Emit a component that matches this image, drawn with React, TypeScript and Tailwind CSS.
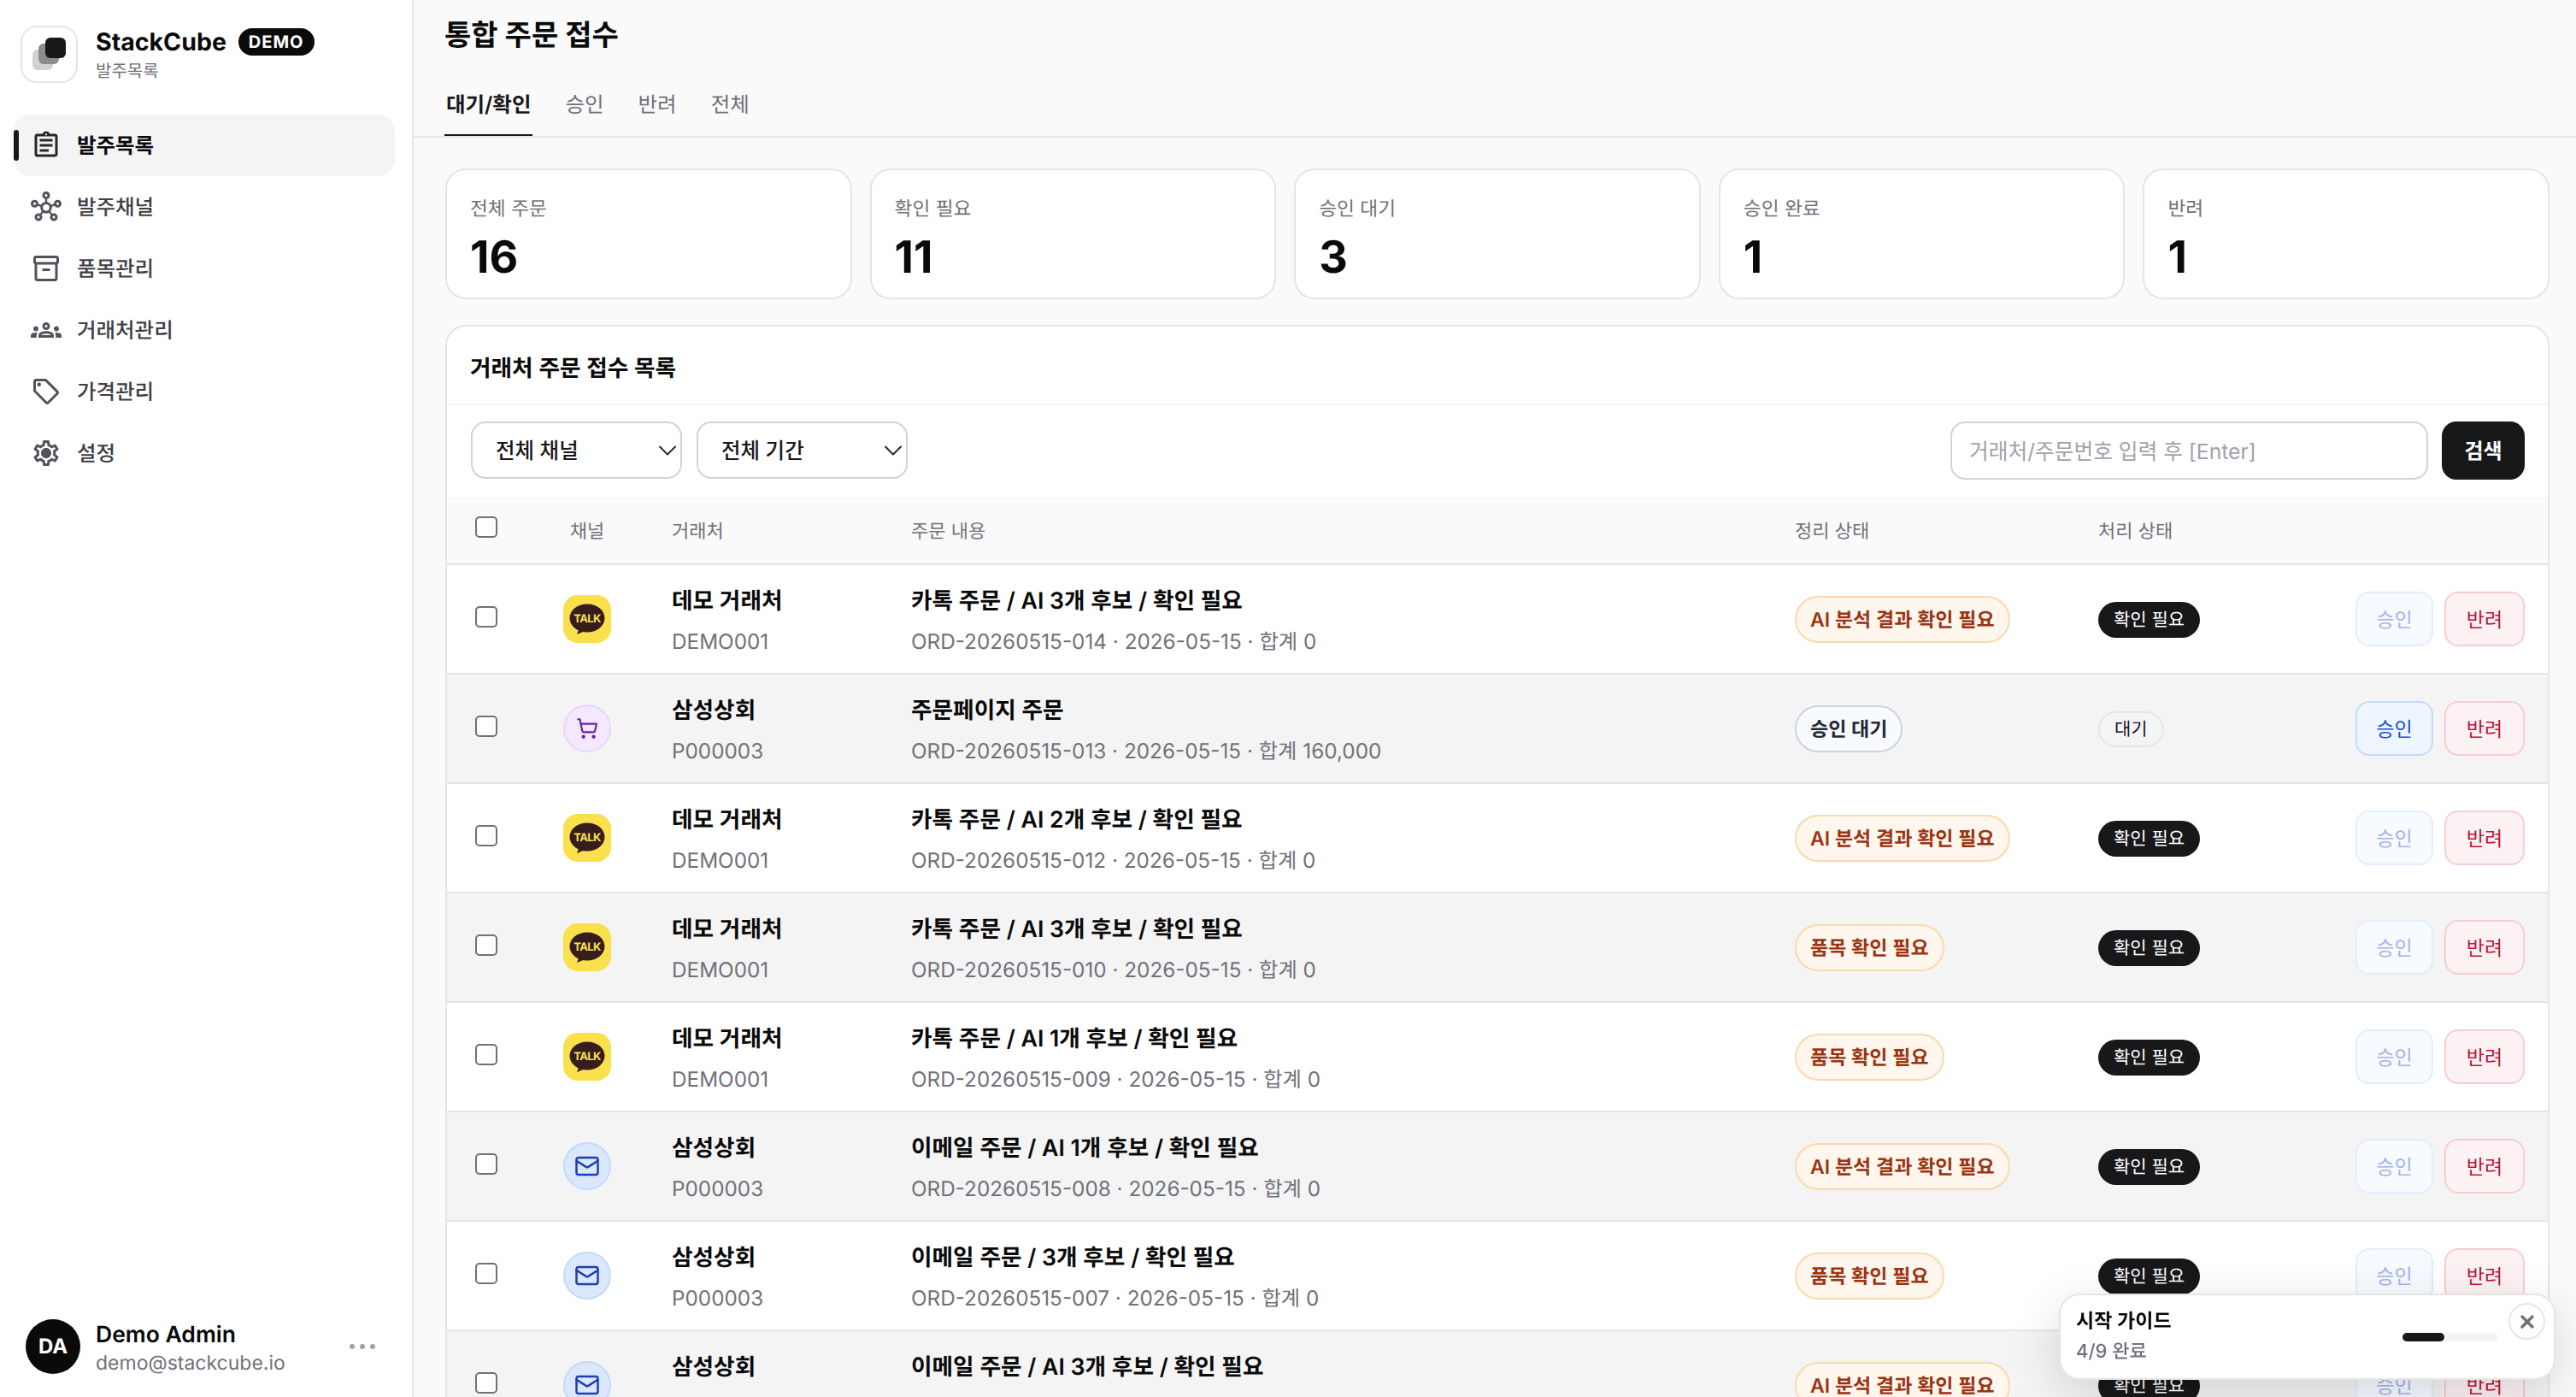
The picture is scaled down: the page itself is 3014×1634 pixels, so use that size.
import { ChevronDown, Mail, ShoppingCart, X } from "lucide-react";
import {
  MdOutlineAssignment,
  MdOutlineGroups,
  MdOutlineHub,
  MdOutlineInventory2,
  MdOutlineSell,
  MdOutlineSettings,
} from "react-icons/md";

type Order = {
  channel: "kakao" | "cart" | "mail";
  name: string;
  code: string;
  title: string;
  meta: string;
  review: "ai" | "item" | "wait";
  pending?: boolean;
};

const SettingsIcon = ({ size, color }: { size: number; color: string }) => (
  <svg width={size} height={size} viewBox="0 0 24 24" color={color}>
    <MdOutlineSettings size={24} color={color} />
    <circle cx="12" cy="12" r="3.6" fill={color} />
  </svg>
);

const navItems = [
  { label: "발주목록", icon: MdOutlineAssignment, active: true },
  { label: "발주채널", icon: MdOutlineHub },
  { label: "품목관리", icon: MdOutlineInventory2 },
  { label: "거래처관리", icon: MdOutlineGroups },
  { label: "가격관리", icon: MdOutlineSell },
  { label: "설정", icon: SettingsIcon },
];

const stats = [
  { label: "전체 주문", value: 16 },
  { label: "확인 필요", value: 11 },
  { label: "승인 대기", value: 3 },
  { label: "승인 완료", value: 1 },
  { label: "반려", value: 1 },
];

const orders: Order[] = [
  { channel: "kakao", name: "데모 거래처", code: "DEMO001", title: "카톡 주문 / AI 3개 후보 / 확인 필요", meta: "ORD-20260515-014 · 2026-05-15 · 합계 0", review: "ai" },
  { channel: "cart", name: "삼성상회", code: "P000003", title: "주문페이지 주문", meta: "ORD-20260515-013 · 2026-05-15 · 합계 160,000", review: "wait", pending: true },
  { channel: "kakao", name: "데모 거래처", code: "DEMO001", title: "카톡 주문 / AI 2개 후보 / 확인 필요", meta: "ORD-20260515-012 · 2026-05-15 · 합계 0", review: "ai" },
  { channel: "kakao", name: "데모 거래처", code: "DEMO001", title: "카톡 주문 / AI 3개 후보 / 확인 필요", meta: "ORD-20260515-010 · 2026-05-15 · 합계 0", review: "item" },
  { channel: "kakao", name: "데모 거래처", code: "DEMO001", title: "카톡 주문 / AI 1개 후보 / 확인 필요", meta: "ORD-20260515-009 · 2026-05-15 · 합계 0", review: "item" },
  { channel: "mail", name: "삼성상회", code: "P000003", title: "이메일 주문 / AI 1개 후보 / 확인 필요", meta: "ORD-20260515-008 · 2026-05-15 · 합계 0", review: "ai" },
  { channel: "mail", name: "삼성상회", code: "P000003", title: "이메일 주문 / 3개 후보 / 확인 필요", meta: "ORD-20260515-007 · 2026-05-15 · 합계 0", review: "item" },
  { channel: "mail", name: "삼성상회", code: "P000003", title: "이메일 주문 / AI 3개 후보 / 확인 필요", meta: "ORD-20260515-006 · 2026-05-15 · 합계 0", review: "ai" },
];

const ChannelIcon = ({ channel }: { channel: Order["channel"] }) => {
  if (channel === "kakao") {
    return (
      <div className="w-[56px] h-[56px] rounded-[17px] bg-[#f9e04c] flex items-center justify-center">
        <svg width="56" height="56" viewBox="0 0 56 56">
          <ellipse cx="28" cy="27" rx="20.5" ry="16.5" fill="#361c1c" />
          <path d="M19 38 L16 46 L28 41 Z" fill="#361c1c" />
          <text
            x="28"
            y="31.5"
            textAnchor="middle"
            fontSize="13"
            fontWeight="700"
            fill="#f9e04c"
            fontFamily="Inter, sans-serif"
            letterSpacing="-0.6"
          >
            TALK
          </text>
        </svg>
      </div>
    );
  }
  if (channel === "cart") {
    return (
      <div className="w-[56px] h-[56px] rounded-full bg-[#f3e8ff] border-2 border-[#e9d5ff] flex items-center justify-center">
        <ShoppingCart size={26} color="#6b21a8" strokeWidth={2} />
      </div>
    );
  }
  return (
    <div className="w-[56px] h-[56px] rounded-full bg-[#dbe7fd] border-2 border-[#bfdbfe] flex items-center justify-center">
      <Mail size={30} color="#1e40af" strokeWidth={2} />
    </div>
  );
};

const ReviewBadge = ({ review }: { review: Order["review"] }) => {
  if (review === "wait") {
    return (
      <span className="h-[55px] px-[16px] pt-[2px] rounded-full border-2 border-[#cbd5e1] bg-[#f8fafc] text-[#1e293b] text-[23px] font-semibold flex items-center">
        승인 대기
      </span>
    );
  }
  return (
    <span className="h-[55px] px-[16px] pt-[2px] rounded-full border-2 border-[#fbd9aa] bg-[#fff7ed] text-[#9a3412] text-[23px] font-semibold flex items-center">
      {review === "ai" ? "AI 분석 결과 확인 필요" : "품목 확인 필요"}
    </span>
  );
};

const OrderRow = ({ order, index }: { order: Order; index: number }) => (
  <div
    className={`flex items-center h-[128px] shrink-0 border-b-2 border-[#e5e5e5] ${
      index % 2 === 1 ? "bg-[#f4f4f5]" : "bg-white"
    }`}
  >
    <div className="w-[100px] pl-[33px] flex">
      <input
        type="checkbox"
        className="appearance-none w-[26px] h-[25px] mb-[6px] rounded-[5px] border-2 border-[#71717a] bg-white"
      />
    </div>
    <div className="w-[128px] flex justify-center">
      <ChannelIcon channel={order.channel} />
    </div>
    <div className="ml-[35px] w-[280px] pt-[2px]">
      <div className="text-[26.7px] leading-[36px] font-semibold text-[#0a0a0a]">{order.name}</div>
      <div className="mt-[13px] text-[24.3px] leading-[32px] text-[#71717a]">{order.code}</div>
    </div>
    <div className="w-[1034px] pt-[2px]">
      <div className="text-[26.7px] leading-[36px] font-semibold text-[#0a0a0a]">{order.title}</div>
      <div className="mt-[13px] text-[24.3px] leading-[32px] text-[#71717a]">{order.meta}</div>
    </div>
    <div className="w-[355px] flex">
      <ReviewBadge review={order.review} />
    </div>
    <div className="flex-1 flex items-center justify-between pr-[27px]">
      {order.pending ? (
        <span className="mt-[2px] h-[42px] px-[17px] pt-[2px] rounded-full border-2 border-[#e5e5e5] bg-[#f4f4f5] text-[#18181b] text-[21px] flex items-center">
          대기
        </span>
      ) : (
        <span className="mt-[2px] h-[42px] px-[18px] pt-[2px] rounded-full bg-[#18181b] text-white text-[21px] flex items-center">
          확인 필요
        </span>
      )}
      <div className="flex gap-[13px]">
        <button
          className={`w-[91px] h-[64px] pt-[2px] rounded-[16px] border-2 text-[23px] ${
            order.pending
              ? "bg-[#eff6ff] border-[#bfdbfe] text-[#1d4ed8]"
              : "bg-[#f7faff] border-[#e2edfe] text-[#a3b4ec]"
          }`}
        >
          승인
        </button>
        <button className="w-[94px] h-[64px] pt-[2px] rounded-[16px] border-2 border-[#f8ccd3] bg-[#fdf2f3] text-[23px] text-[#be123c]">
          반려
        </button>
      </div>
    </div>
  </div>
);

const FilterSelect = ({ label }: { label: string }) => (
  <div className="relative w-[247px] h-[67px]">
    <select
      defaultValue={label}
      className="appearance-none w-full h-full pt-[2px] rounded-[17px] border-2 border-[#d4d4d8] bg-white pl-[27px] text-[24.5px] font-medium text-[#18181b]"
    >
      <option>{label}</option>
    </select>
    <ChevronDown size={36} color="#27272a" strokeWidth={1.3} className="absolute right-[-1px] top-[16px]" />
  </div>
);

export default function App() {
  return (
    <div
      className="flex h-screen overflow-hidden bg-[#fafafa] text-[#0a0a0a] [text-rendering:geometricPrecision]"
      style={{ fontFamily: 'Inter, "Noto Sans CJK KR", sans-serif' }}
    >
      <aside className="w-[484px] shrink-0 h-full flex flex-col justify-between bg-white border-r-2 border-[#e5e5e5]">
        <div>
          <div className="flex pt-[30px] pl-[24px] gap-[21px]">
            <div className="w-[67px] h-[67px] rounded-[19px] border-2 border-[#e5e5e5] flex items-center justify-center">
              <svg width="40" height="40" viewBox="0 0 40 40">
                <rect x="0" y="14" width="24" height="24" rx="6" fill="#d2d2d2" />
                <rect x="7" y="7" width="24" height="24" rx="6" fill="#8c8c8c" />
                <rect x="15" y="0" width="24" height="24" rx="6" fill="#18181b" />
              </svg>
            </div>
            <div className="pt-[1px]">
              <div className="flex items-center gap-[14px]">
                <span className="text-[28.5px] leading-[36px] font-bold text-[#0a0a0a]">StackCube</span>
                <span className="h-[32px] px-[12px] rounded-full bg-[#0a0a0a] text-white text-[20px] font-bold tracking-[1px] flex items-center">
                  DEMO
                </span>
              </div>
              <div className="text-[20px] leading-[32px] text-[#71717a]">발주목록</div>
            </div>
          </div>
          <nav className="mt-[35px] ml-[16px] mr-[20px]">
            {navItems.map((item) => (
              <div
                key={item.label}
                className={`relative flex items-center h-[72px] pl-[20px] gap-[18px] rounded-[20px] text-[24.5px] ${
                  item.active ? "bg-[#f4f4f5] text-[#09090b] font-semibold" : "text-[#3f3f46] font-medium"
                }`}
              >
                {item.active && (
                  <span className="absolute left-0 top-[18px] w-[6px] h-[36px] rounded-full bg-[#18181b]" />
                )}
                <item.icon size={36} color={item.active ? "#27272a" : "#52525b"} />
                {item.label}
              </div>
            ))}
          </nav>
        </div>
        <div className="flex items-center pl-[30px] pr-[43px] pb-[24px]">
          <div className="w-[64px] h-[64px] rounded-full bg-[#0a0a0a] text-white text-[24px] font-bold flex items-center justify-center">
            DA
          </div>
          <div className="ml-[18px] flex-1 pt-[6px]">
            <div className="text-[26.5px] leading-[32px] font-semibold text-[#0a0a0a]">Demo Admin</div>
            <div className="mt-[1px] text-[23px] leading-[32px] text-[#71717a]">demo@stackcube.io</div>
          </div>
          <div className="flex gap-[6px]">
            <span className="w-[6px] h-[6px] rounded-full bg-[#a1a1aa]" />
            <span className="w-[6px] h-[6px] rounded-full bg-[#a1a1aa]" />
            <span className="w-[6px] h-[6px] rounded-full bg-[#a1a1aa]" />
          </div>
        </div>
      </aside>

      <main className="flex-1 min-w-0 h-full overflow-hidden">
        <header className="h-[161px] border-b-2 border-[#e5e5e5] pl-[36px] pt-[20px]">
          <h1 className="text-[34px] leading-[44px] font-bold text-[#0a0a0a]">통합 주문 접수</h1>
          <div className="mt-[38px] flex gap-[36px]">
            {["대기/확인", "승인", "반려", "전체"].map((tab, i) => (
              <div
                key={tab}
                className={`px-[2px] h-[57px] pb-[15px] text-[24.5px] leading-[40px] border-b-2 ${
                  i === 0 ? "border-[#18181b] text-[#18181b] font-semibold" : "border-transparent text-[#71717a]"
                }`}
              >
                {tab}
              </div>
            ))}
          </div>
        </header>

        <div className="pt-[36px] pl-[37px] pr-[31px]">
          <div className="grid grid-cols-5 gap-[21px]">
            {stats.map((stat) => (
              <div
                key={stat.label}
                className="h-[153px] rounded-[24px] border-2 border-[#e5e5e5] bg-white pl-[27px] pt-[30px]"
              >
                <div className="text-[22.7px] leading-[32px] text-[#71717a]">{stat.label}</div>
                <div className="mt-[10px] text-[52px] leading-[60px] font-bold text-[#0a0a0a]">{stat.value}</div>
              </div>
            ))}
          </div>

          <section className="mt-[30px] rounded-t-[24px] border-2 border-b-0 border-[#e5e5e5] bg-white">
            <div className="h-[92px] pt-[8px] pl-[27px] flex items-center border-b-2 border-[#f4f4f5]">
              <h2 className="text-[26.7px] font-semibold text-[#0a0a0a]">거래처 주문 접수 목록</h2>
            </div>
            <div className="h-[107px] pt-[19px] pl-[28px] pr-[27px] flex justify-between">
              <div className="flex gap-[17px]">
                <FilterSelect label="전체 채널" />
                <FilterSelect label="전체 기간" />
              </div>
              <div className="flex gap-[16px]">
                <input
                  placeholder="거래처/주문번호 입력 후 [Enter]"
                  className="w-[559px] h-[68px] pt-[2px] rounded-[17px] border-2 border-[#d4d4d8] px-[20px] text-[24.7px] placeholder:text-[#a1a1aa]"
                />
                <button className="w-[97px] h-[68px] pt-[2px] rounded-[17px] bg-[#18181b] text-white text-[24px] font-semibold">
                  검색
                </button>
              </div>
            </div>
            <div className="flex items-center h-[80px] pt-[4px] border-b-2 border-[#e5e5e5] bg-[#fafafa] text-[22px] text-[#71717a]">
              <div className="w-[100px] pl-[33px] flex">
                <input
                  type="checkbox"
                  className="appearance-none w-[26px] h-[25px] mb-[12px] rounded-[5px] border-2 border-[#71717a] bg-white"
                />
              </div>
              <div className="w-[128px] text-center">채널</div>
              <div className="ml-[35px] w-[280px]">거래처</div>
              <div className="w-[1034px]">주문 내용</div>
              <div className="w-[355px]">정리 상태</div>
              <div>처리 상태</div>
            </div>
            {orders.map((order, i) => (
              <OrderRow key={order.meta} order={order} index={i} />
            ))}
          </section>
        </div>
      </main>

      <div className="fixed right-[24px] bottom-[20px] w-[581px] h-[101px] rounded-[24px] border-2 border-[#e5e5e5] bg-white shadow-[0_16px_60px_rgba(0,0,0,0.14)] flex items-start pl-[18px] pr-[10px]">
        <div className="flex-1 pt-[13px]">
          <div className="text-[23px] leading-[34px] font-semibold text-[#0a0a0a]">시작 가이드</div>
          <div className="mt-[3px] text-[22px] leading-[32px] font-medium text-[#71717a]">4/9 완료</div>
        </div>
        <div className="mt-[44px] w-[111px] h-[10px] rounded-full bg-[#f4f4f5] mr-[13px]">
          <div className="h-full rounded-full bg-[#18181b]" style={{ width: `${(4 / 9) * 100}%` }} />
        </div>
        <button className="mt-[9px] w-[43px] h-[43px] rounded-full border-2 border-[#e5e5e5] bg-white flex items-center justify-center">
          <X size={24} color="#71717a" strokeWidth={3.5} />
        </button>
      </div>
    </div>
  );
}
